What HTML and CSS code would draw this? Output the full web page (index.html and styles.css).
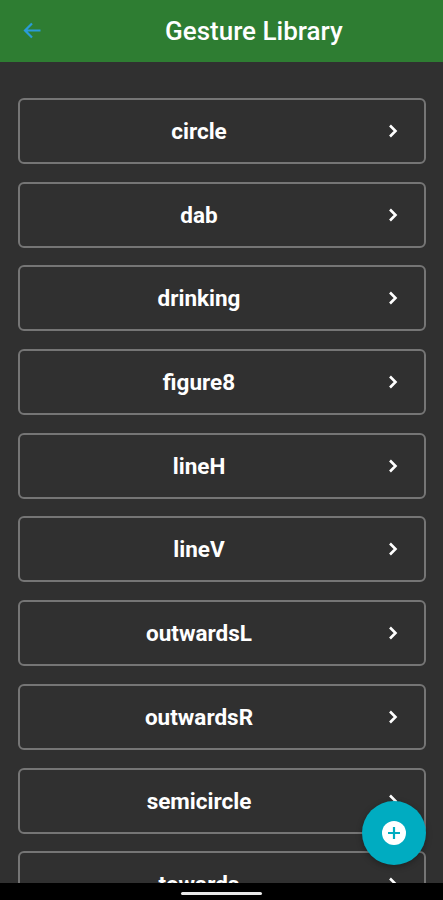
FILE: index.html
```html
<!DOCTYPE html>
<html lang="en">
<head>
    <meta charset="UTF-8">
    <meta name="viewport" content="width=device-width, initial-scale=1.0">
    <title>Gesture Library</title>
    <link rel="stylesheet" href="styles.css">
</head>
<body>
    <header class="app-bar">
        <a href="#" class="back-button">
            <svg width="24" height="24" viewBox="0 0 24 24"><path d="M20.5 11.5H5M12 4.5l-7 7 7 7" fill="none" stroke="#2a9bd8" stroke-width="2.2"/></svg>
        </a>
        <h1 class="app-title">Gesture Library</h1>
    </header>

    <main class="gesture-list">
        <a href="#" class="gesture-row"><span class="gesture-name">circle</span><svg class="chevron" width="24" height="24" viewBox="0 0 24 24"><path d="M9 6.5l5.5 5.5L9 17.5"/></svg></a>
        <a href="#" class="gesture-row"><span class="gesture-name">dab</span><svg class="chevron" width="24" height="24" viewBox="0 0 24 24"><path d="M9 6.5l5.5 5.5L9 17.5"/></svg></a>
        <a href="#" class="gesture-row"><span class="gesture-name">drinking</span><svg class="chevron" width="24" height="24" viewBox="0 0 24 24"><path d="M9 6.5l5.5 5.5L9 17.5"/></svg></a>
        <a href="#" class="gesture-row"><span class="gesture-name">figure8</span><svg class="chevron" width="24" height="24" viewBox="0 0 24 24"><path d="M9 6.5l5.5 5.5L9 17.5"/></svg></a>
        <a href="#" class="gesture-row"><span class="gesture-name">lineH</span><svg class="chevron" width="24" height="24" viewBox="0 0 24 24"><path d="M9 6.5l5.5 5.5L9 17.5"/></svg></a>
        <a href="#" class="gesture-row"><span class="gesture-name">lineV</span><svg class="chevron" width="24" height="24" viewBox="0 0 24 24"><path d="M9 6.5l5.5 5.5L9 17.5"/></svg></a>
        <a href="#" class="gesture-row"><span class="gesture-name">outwardsL</span><svg class="chevron" width="24" height="24" viewBox="0 0 24 24"><path d="M9 6.5l5.5 5.5L9 17.5"/></svg></a>
        <a href="#" class="gesture-row"><span class="gesture-name">outwardsR</span><svg class="chevron" width="24" height="24" viewBox="0 0 24 24"><path d="M9 6.5l5.5 5.5L9 17.5"/></svg></a>
        <a href="#" class="gesture-row"><span class="gesture-name">semicircle</span><svg class="chevron" width="24" height="24" viewBox="0 0 24 24"><path d="M9 6.5l5.5 5.5L9 17.5"/></svg></a>
        <a href="#" class="gesture-row"><span class="gesture-name">towards</span><svg class="chevron" width="24" height="24" viewBox="0 0 24 24"><path d="M9 6.5l5.5 5.5L9 17.5"/></svg></a>
    </main>

    <button class="add-button">
        <svg width="26" height="26" viewBox="0 0 26 26"><circle cx="13" cy="13" r="12" fill="#fff"/><path d="M13 7v12M7 13h12" stroke="#00acc1" stroke-width="2.2"/></svg>
    </button>

    <div class="nav-bar">
        <span class="home-pill"></span>
    </div>
</body>
</html>
```

FILE: styles.css
```css
body {
    font-family: Roboto, "Liberation Sans", sans-serif;
    margin: 0;
    background-color: #303030;
    color: #fff;
    display: flex;
    flex-direction: column;
    height: 100vh;
    overflow: hidden;
}

.app-bar {
    height: 62px;
    flex-shrink: 0;
    background-color: #2e7d32;
    display: flex;
    align-items: center;
    padding-left: 20px;
}

.back-button {
    display: flex;
    width: 24px;
    height: 24px;
}

.app-title {
    margin: 0 0 0 121px;
    font-size: 26px;
    font-weight: 500;
    white-space: nowrap;
}

.gesture-list {
    flex: 1;
    min-height: 0;
    overflow: hidden;
    padding: 36px 17px 0 18px;
    display: flex;
    flex-direction: column;
    gap: 17.7px;
}

.gesture-row {
    height: 66px;
    flex-shrink: 0;
    box-sizing: border-box;
    border: 2px solid #757575;
    border-radius: 6px;
    display: flex;
    align-items: center;
    padding-right: 19px;
    color: #fff;
    text-decoration: none;
}

.gesture-name {
    flex: 1;
    padding-right: 3px;
    text-align: center;
    font-size: 22.5px;
    font-weight: 700;
}

.chevron {
    fill: none;
    stroke: #fff;
    stroke-width: 2.6;
}

.add-button {
    position: absolute;
    left: 362px;
    top: 801px;
    width: 64px;
    height: 64px;
    padding: 0;
    border: none;
    border-radius: 50%;
    background-color: #00acc1;
    display: flex;
    align-items: center;
    justify-content: center;
    box-shadow: 0 2px 6px rgba(0, 0, 0, 0.3);
}

.nav-bar {
    height: 17px;
    flex-shrink: 0;
    background-color: #000;
    display: flex;
    justify-content: center;
    align-items: flex-end;
}

.home-pill {
    width: 81px;
    height: 3px;
    margin-bottom: 5px;
    border-radius: 2px;
    background-color: #e8e8e8;
}
```
